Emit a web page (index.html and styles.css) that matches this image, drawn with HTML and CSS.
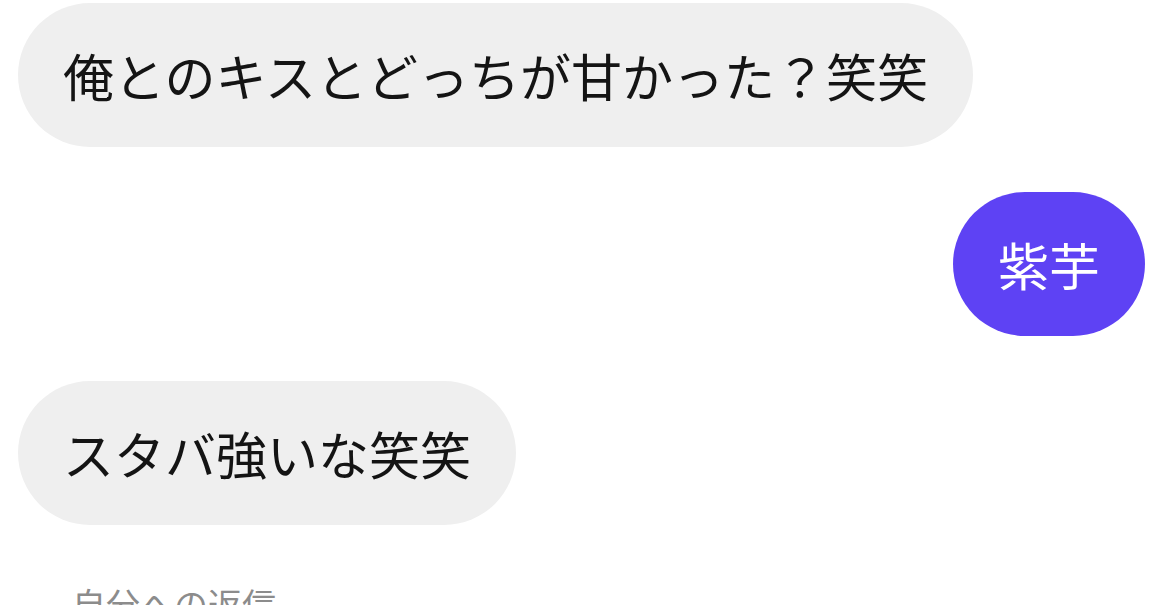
FILE: index.html
```html
<!DOCTYPE html>
<html lang="ja">

<head>
    <meta charset="UTF-8">
    <meta name="viewport" content="width=device-width, initial-scale=1.0">
    <title>Chat</title>
    <link rel="stylesheet" href="styles.css">
</head>

<body>
    <div class="chat">
        <div class="bubble received">俺とのキスとどっちが甘かった？笑笑</div>
        <div class="bubble sent">紫芋</div>
        <div class="bubble received">スタバ強いな笑笑</div>
        <div class="reply_label">自分への返信</div>
    </div>
</body>

</html>
```

FILE: styles.css
```css
* {
    margin: 0;
    padding: 0;
    box-sizing: border-box;
}

body {
    background: white;
    font-family: "Noto Sans CJK JP", "Noto Sans", sans-serif;
    overflow: hidden;
}

.chat {
    display: flex;
    flex-flow: column;
    align-items: flex-start;
    gap: 45px;
    padding: 3px 24px 0 18px;
}

.bubble {
    padding: 36px 45px;
    font-size: 51px;
    line-height: 72px;
    border-radius: 72px;
    white-space: nowrap;
}

.received {
    background: rgb(239, 239, 239);
    color: rgb(20, 20, 20);
}

.sent {
    align-self: flex-end;
    background: rgb(94, 66, 244);
    color: white;
}

.reply_label {
    margin-top: 13px;
    padding-left: 54px;
    font-size: 34px;
    line-height: 41px;
    color: rgb(140, 140, 140);
}
```
